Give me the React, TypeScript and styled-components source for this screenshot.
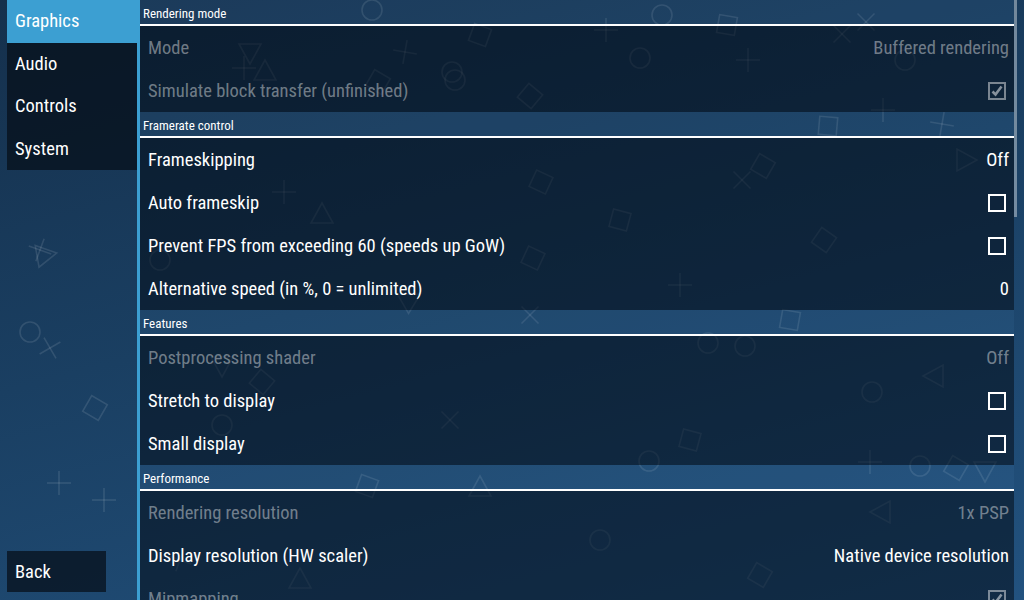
import React from "react";
import styled, { createGlobalStyle } from "styled-components";

const GlobalStyle = createGlobalStyle`
  html, body {
    margin: 0;
    padding: 0;
    width: 100%;
    height: 100%;
    overflow: hidden;
  }
  body {
    background: linear-gradient(165deg, #15304c 0%, #1a3f62 45%, #22527f 100%);
    font-family: "Roboto Condensed", "Liberation Sans Narrow", Roboto, sans-serif;
    color: #fff;
  }
`;

const Screen = styled.div`
  position: relative;
  width: 1024px;
  height: 600px;
  display: flex;
  padding-left: 7px;
  box-sizing: border-box;
  overflow: hidden;
`;

const Backdrop = styled.svg`
  position: absolute;
  left: 0;
  top: 0;
  width: 1024px;
  height: 600px;
  z-index: 0;
  pointer-events: none;
`;

const Sidebar = styled.nav`
  position: relative;
  z-index: 1;
  width: 130px;
  display: flex;
  flex-direction: column;
  justify-content: space-between;
  padding-bottom: 8px;
`;

const TabList = styled.div`
  display: flex;
  flex-direction: column;
`;

const Tab = styled.div<{ $active?: boolean }>`
  height: 42.6px;
  display: flex;
  align-items: center;
  padding-left: 8px;
  font-size: 18.5px;
  color: #fff;
  background: ${(p) => (p.$active ? "#3c9fd2" : "rgba(5, 14, 24, 0.72)")};
  margin-right: ${(p) => (p.$active ? "-3px" : "0")};
`;

const BackButton = styled.div`
  width: 99px;
  height: 41px;
  display: flex;
  align-items: center;
  padding-left: 8px;
  box-sizing: border-box;
  font-size: 18.5px;
  background: rgba(5, 14, 24, 0.72);
`;

const Divider = styled.div`
  position: relative;
  z-index: 1;
  width: 3px;
  background: #3c9fd2;
`;

const Main = styled.main`
  position: relative;
  z-index: 1;
  width: 874px;
  height: 600px;
  overflow: hidden;
`;

const SectionHeader = styled.div`
  height: 26px;
  box-sizing: border-box;
  display: flex;
  align-items: center;
  padding: 3px 0 0 3px;
  font-size: 13px;
  color: #fff;
  background: rgba(70, 130, 180, 0.12);
  border-bottom: 2px solid #fff;
`;

const Row = styled.div<{ $disabled?: boolean }>`
  height: 43px;
  display: flex;
  align-items: center;
  justify-content: space-between;
  padding: 0 5px 0 8px;
  font-size: 18.5px;
  color: ${(p) => (p.$disabled ? "rgba(255,255,255,0.42)" : "#fff")};
  background: rgba(4, 13, 24, 0.55);
`;

const Value = styled.span`
  text-align: right;
`;

const Box = styled.span<{ $disabled?: boolean }>`
  width: 18px;
  height: 18px;
  margin-right: 3px;
  box-sizing: border-box;
  border: 2px solid ${(p) => (p.$disabled ? "rgba(255,255,255,0.45)" : "#fff")};
  display: flex;
  align-items: center;
  justify-content: center;
`;

const ScrollTrack = styled.div`
  position: relative;
  z-index: 1;
  width: 3px;
  height: 600px;
`;

const ScrollThumb = styled.div`
  height: 217px;
  background: rgba(190, 200, 210, 0.55);
`;

type Item = {
  label: string;
  value?: string;
  check?: boolean;
  disabled?: boolean;
};

type Section = { title: string; items: Item[] };

const sections: Section[] = [
  {
    title: "Rendering mode",
    items: [
      { label: "Mode", value: "Buffered rendering", disabled: true },
      { label: "Simulate block transfer (unfinished)", check: true, disabled: true },
    ],
  },
  {
    title: "Framerate control",
    items: [
      { label: "Frameskipping", value: "Off" },
      { label: "Auto frameskip", check: false },
      { label: "Prevent FPS from exceeding 60 (speeds up GoW)", check: false },
      { label: "Alternative speed (in %, 0 = unlimited)", value: "0" },
    ],
  },
  {
    title: "Features",
    items: [
      { label: "Postprocessing shader", value: "Off", disabled: true },
      { label: "Stretch to display", check: false },
      { label: "Small display", check: false },
    ],
  },
  {
    title: "Performance",
    items: [
      { label: "Rendering resolution", value: "1x PSP", disabled: true },
      { label: "Display resolution (HW scaler)", value: "Native device resolution" },
      { label: "Mipmapping", check: true, disabled: true },
    ],
  },
];

type Shape = ["o" | "x" | "s" | "t", number, number, number];

const shapes: Shape[] = [
  ["o", 372, 10, 0], ["x", 405, 52, 10], ["s", 378, 82, 30], ["t", 250, 52, 180],
  ["t", 265, 72, 0], ["x", 244, 68, 0], ["s", 480, 35, 20], ["o", 455, 80, 0],
  ["s", 530, 96, 40], ["o", 640, 58, 0], ["x", 606, 30, 0], ["o", 662, 15, 0],
  ["s", 727, 25, 10], ["x", 748, 60, 0], ["s", 828, 126, 5], ["x", 866, 22, 45],
  ["x", 883, 110, 0], ["x", 942, 124, 10], ["t", 965, 160, 90], ["s", 763, 166, 30],
  ["x", 742, 180, 45], ["s", 541, 182, 25], ["o", 905, 60, 0], ["x", 842, 34, 45],
  ["x", 284, 192, 0], ["t", 322, 215, 0], ["t", 45, 255, 80], ["x", 40, 250, 20],
  ["s", 533, 258, 25], ["s", 824, 240, 35], ["x", 530, 315, 45], ["s", 790, 320, 10],
  ["o", 708, 343, 0], ["o", 745, 346, 0], ["o", 30, 332, 0], ["x", 50, 348, 60],
  ["s", 95, 408, 30], ["t", 222, 365, 180], ["s", 262, 382, 40], ["o", 222, 425, 0],
  ["o", 872, 392, 0], ["t", 935, 376, 270], ["o", 649, 461, 0], ["x", 870, 462, 0],
  ["o", 920, 466, 0], ["s", 956, 468, 30], ["t", 985, 470, 180], ["x", 59, 483, 0],
  ["x", 104, 500, 0], ["s", 367, 486, 20], ["t", 480, 488, 0], ["t", 882, 512, 270],
  ["o", 452, 72, 0], ["s", 690, 440, 15], ["x", 180, 560, 20], ["o", 600, 540, 0],
  ["s", 760, 575, 30], ["t", 300, 580, 0], ["x", 450, 420, 45], ["o", 160, 260, 0],
  ["s", 620, 220, 15], ["x", 680, 285, 0], ["t", 410, 300, 60],
];

const PspShape: React.FC<{ s: Shape }> = ({ s }) => {
  const [kind, x, y, rot] = s;
  const t = `translate(${x} ${y}) rotate(${rot})`;
  if (kind === "o") return <circle cx={x} cy={y} r={10} />;
  if (kind === "s") return <rect x={-9} y={-9} width={18} height={18} transform={t} />;
  if (kind === "t") return <polygon points="0,-12 11,8 -11,8" transform={t} />;
  return (
    <g transform={t}>
      <line x1={-12} y1={0} x2={12} y2={0} />
      <line x1={0} y1={-12} x2={0} y2={12} />
    </g>
  );
};

const Check: React.FC<{ color: string }> = ({ color }) => (
  <svg width="12" height="12" viewBox="0 0 12 12">
    <path d="M1.5 6.5 L4.5 9.5 L10.5 1.5" fill="none" stroke={color} strokeWidth="2.6" />
  </svg>
);

const SettingRow: React.FC<{ item: Item }> = ({ item }) => (
  <Row $disabled={item.disabled}>
    <span>{item.label}</span>
    {item.check !== undefined ? (
      <Box $disabled={item.disabled}>
        {item.check && <Check color={item.disabled ? "rgba(255,255,255,0.5)" : "#fff"} />}
      </Box>
    ) : (
      <Value>{item.value}</Value>
    )}
  </Row>
);

export default function App() {
  return (
    <>
      <GlobalStyle />
      <Screen>
        <Backdrop viewBox="0 0 1024 600" fill="none" stroke="rgba(255,255,255,0.11)" strokeWidth="1.6">
          {shapes.map((s, i) => (
            <PspShape key={i} s={s} />
          ))}
        </Backdrop>
        <Sidebar>
          <TabList>
            <Tab $active>Graphics</Tab>
            <Tab>Audio</Tab>
            <Tab>Controls</Tab>
            <Tab>System</Tab>
          </TabList>
          <BackButton>Back</BackButton>
        </Sidebar>
        <Divider />
        <Main>
          {sections.map((sec) => (
            <React.Fragment key={sec.title}>
              <SectionHeader>{sec.title}</SectionHeader>
              {sec.items.map((it) => (
                <SettingRow key={it.label} item={it} />
              ))}
            </React.Fragment>
          ))}
        </Main>
        <ScrollTrack>
          <ScrollThumb />
        </ScrollTrack>
      </Screen>
    </>
  );
}
